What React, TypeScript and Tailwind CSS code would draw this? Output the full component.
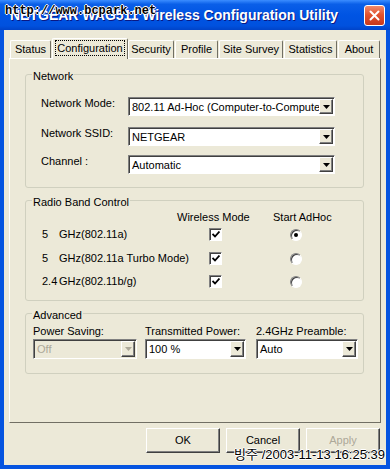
import React from "react";

const tabs = [
  { label: "Status", cls: "w-[41px] h-[18px] mb-[1px]" },
  { label: "Configuration", cls: "w-[76px] h-[21px] ml-[1px]", active: true },
  { label: "Security", cls: "w-[46px] h-[18px] mb-[1px]" },
  { label: "Profile", cls: "w-[43px] h-[18px] mb-[1px] ml-[1px]" },
  { label: "Site Survey", cls: "w-[64px] h-[18px] mb-[1px] ml-[1px]" },
  { label: "Statistics", cls: "w-[53px] h-[18px] mb-[1px] ml-[1px]" },
  { label: "About", cls: "w-[42px] h-[18px] mb-[1px] ml-[1px]" },
];

function Arrow({ disabled }: { disabled?: boolean }) {
  return (
    <div className="flex h-full w-[14px] shrink-0 items-center justify-center border border-t-white border-l-white border-r-[#404040] border-b-[#404040] bg-[#ece9d8] shadow-[inset_-1px_-1px_0_#808080]">
      <svg width="7" height="4" viewBox="0 0 7 4">
        <path d="M0 0h7L3.5 4z" fill={disabled ? "#aca899" : "#000"} />
      </svg>
    </div>
  );
}

function Combo({ value, cls, disabled }: { value: string; cls: string; disabled?: boolean }) {
  return (
    <div
      className={`flex items-stretch border border-t-[#808080] border-l-[#808080] border-r-white border-b-white p-[1px] shadow-[inset_1px_1px_0_#404040] ${cls} ${
        disabled ? "bg-[#ece9d8] text-[#aca899]" : "bg-white text-black"
      }`}
    >
      <div className="flex-1 overflow-hidden whitespace-nowrap pl-[2px] leading-[15px] pt-[1px]">{value}</div>
      <Arrow disabled={disabled} />
    </div>
  );
}

function Group({ title, cls, children }: { title: string; cls: string; children: React.ReactNode }) {
  return (
    <div className={`relative w-[339px] rounded-[3px] border border-[#d0d0bf] ${cls}`}>
      <span className="absolute left-[6px] -top-[5px] bg-[#ece9d8] px-[1px] leading-[13px]">{title}</span>
      {children}
    </div>
  );
}

function Check() {
  return (
    <div className="flex h-[13px] w-[13px] items-center justify-center border border-t-[#808080] border-l-[#808080] border-r-white border-b-white bg-white shadow-[inset_1px_1px_0_#404040]">
      <svg width="8" height="7" viewBox="0 0 8 7">
        <path d="M0.5 3 L3 5.5 L7.5 0.5" stroke="#000" strokeWidth="1.8" fill="none" />
      </svg>
    </div>
  );
}

function Radio({ on }: { on?: boolean }) {
  return (
    <div className="flex h-[12px] w-[12px] items-center justify-center rounded-full border border-t-[#808080] border-l-[#808080] border-r-white border-b-white bg-white shadow-[inset_1px_1px_0_#404040]">
      {on && <div className="h-[4px] w-[4px] rounded-full bg-black" />}
    </div>
  );
}

const bands = [
  { a: "5", b: "GHz(802.11a)", on: true, mt: "mt-[4px]" },
  { a: "5", b: "GHz(802.11a Turbo Mode)", mt: "mt-[11px]" },
  { a: "2.4", b: "GHz(802.11b/g)", mt: "mt-[10px]" },
];

export default function App() {
  return (
    <div className="relative flex h-[469px] w-[390px] flex-col overflow-hidden bg-[#0554e0] font-['Liberation_Sans',Arial,sans-serif] text-[11px] text-black">
      {/* title bar */}
      <div className="flex h-[30px] shrink-0 items-center bg-[linear-gradient(180deg,#3b8dff_0%,#0a5fe8_14%,#0054e3_50%,#0051de_86%,#0043c8_100%)] pl-[10px] pr-[5px]">
        <span className="text-[14px] font-bold text-white [text-shadow:1px_1px_#0a1883]">
          NETGEAR WAG511 Wireless Configuration Utility
        </span>
        <div className="ml-auto flex h-[21px] w-[21px] items-center justify-center rounded-[3px] border border-white bg-[linear-gradient(180deg,#f08a6c,#e2532f_45%,#c8381b)]">
          <svg width="11" height="11" viewBox="0 0 11 11">
            <path d="M1.5 1.5L9.5 9.5M9.5 1.5L1.5 9.5" stroke="#fff" strokeWidth="2" strokeLinecap="round" />
          </svg>
        </div>
      </div>

      {/* body */}
      <div className="mx-[4px] mb-[4px] flex flex-1 flex-col bg-[#ece9d8] pt-[8px]">
        <div className="mx-[5px]">
          <div className="relative z-10 -mb-[1px] flex h-[21px] items-end pl-[1px]">
            {tabs.map((t) =>
              t.active ? (
                <div
                  key={t.label}
                  className={`flex items-start justify-center rounded-t-[2px] border-t border-l border-r border-t-white border-l-white border-r-[#716f64] bg-[#ece9d8] pt-[1px] ${t.cls}`}
                >
                  <span className="border border-dotted border-black px-[1px] leading-[14px]">{t.label}</span>
                </div>
              ) : (
                <div
                  key={t.label}
                  className={`flex items-center justify-center rounded-t-[2px] border-t border-l border-r border-t-white border-l-white border-r-[#716f64] bg-[#ece9d8] ${t.cls}`}
                >
                  {t.label}
                </div>
              )
            )}
          </div>

          <div className="h-[365px] border border-t-white border-l-white border-r-[#716f64] border-b-[#716f64] pl-[15px] pt-[15px]">
            <Group title="Network" cls="pl-[15px] pt-[22px] pb-[13px]">
              <div className="flex h-[19px] items-start">
                <span className="w-[87px] leading-[14px] -mt-[1px]">Network Mode:</span>
                <Combo value="802.11 Ad-Hoc (Computer-to-Computer)" cls="h-[19px] w-[207px]" />
              </div>
              <div className="mt-[11px] flex h-[19px] items-start">
                <span className="w-[87px] leading-[14px] -mt-[1px]">Network SSID:</span>
                <Combo value="NETGEAR" cls="h-[19px] w-[207px]" />
              </div>
              <div className="mt-[9px] flex h-[19px] items-start">
                <span className="w-[87px] leading-[14px] -mt-[1px]">Channel :</span>
                <Combo value="Automatic" cls="h-[19px] w-[207px]" />
              </div>
            </Group>

            <Group title="Radio Band Control" cls="mt-[12px] pl-[16px] pt-[9px] pb-[12px]">
              <div className="flex leading-[14px]">
                <span className="w-[135px]" />
                <span className="w-[96px]">Wireless Mode</span>
                <span>Start AdHoc</span>
              </div>
              {bands.map((r, i) => (
                <div key={i} className={`flex h-[13px] items-center ${r.mt}`}>
                  <span className="flex w-[167px]">
                    <span className="w-[17px]">{r.a}</span>
                    <span>{r.b}</span>
                  </span>
                  <Check />
                  <div className="ml-[68px]">
                    <Radio on={r.on} />
                  </div>
                </div>
              ))}
            </Group>

            <Group title="Advanced" cls="mt-[12px] flex pl-[7px] pt-[10px] pb-[14px]">
              <div className="w-[104px]">
                <div className="leading-[14px]">Power Saving:</div>
                <Combo value="Off" cls="mt-[1px] h-[20px] w-[104px]" disabled />
              </div>
              <div className="ml-[8px] w-[101px]">
                <div className="leading-[14px]">Transmitted Power:</div>
                <Combo value="100 %" cls="mt-[1px] h-[20px] w-[101px]" />
              </div>
              <div className="ml-[10px] w-[102px]">
                <div className="leading-[14px]">2.4GHz Preamble:</div>
                <Combo value="Auto" cls="mt-[1px] h-[20px] w-[102px]" />
              </div>
            </Group>
          </div>
        </div>

        <div className="mt-[5px] flex justify-end gap-[6px] pr-[6px]">
          {["OK", "Cancel", "Apply"].map((b) => (
            <div
              key={b}
              className={`flex h-[25px] w-[74px] items-center justify-center border border-t-white border-l-white border-r-[#404040] border-b-[#404040] bg-[#ece9d8] shadow-[inset_-1px_-1px_0_#808080] ${
                b === "Apply" ? "text-[#aca899]" : ""
              }`}
            >
              {b}
            </div>
          ))}
        </div>
      </div>

      {/* watermarks */}
      <span className="absolute left-[5px] top-[4px] font-['Liberation_Mono',monospace] text-[12px] font-bold leading-[15px] text-black [text-shadow:1px_0_#fff,-1px_0_#fff,0_1px_#fff,0_-1px_#fff]">
        http://www.bcpark.net
      </span>
      <span className="absolute bottom-[7px] right-[5px] font-['Liberation_Sans','Noto_Sans_CJK_KR',sans-serif] text-[13px] leading-[15px] text-black [text-shadow:1px_0_#fff,-1px_0_#fff,0_1px_#fff,0_-1px_#fff]">
        빙주 /2003-11-13 16:25:39
      </span>
    </div>
  );
}
